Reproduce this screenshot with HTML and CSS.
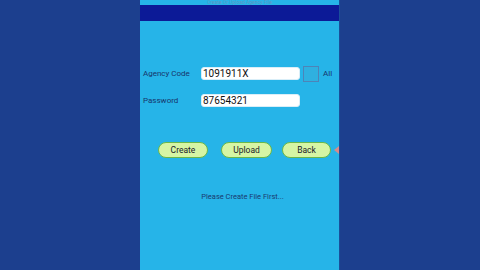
FILE: index.html
```html
<!DOCTYPE html>
<html lang="en">
<head>
    <meta charset="UTF-8">
    <meta name="viewport" content="width=device-width, initial-scale=1.0">
    <title>Agency File</title>
    <link rel="stylesheet" href="styles.css">
</head>
<body>
    <div class="phone">
        <div class="titulo">Create Or Upload Agency File</div>
        <div class="barra"></div>

        <div class="formulario">
            <div class="fila">
                <label for="agencia">Agency Code</label>
                <div class="campo" id="agencia">1091911X</div>
                <span class="check"></span>
                <span class="todos">All</span>
            </div>
            <div class="fila">
                <label for="clave">Password</label>
                <div class="campo" id="clave">87654321</div>
            </div>
        </div>

        <div class="botones">
            <button class="btn-create">Create</button>
            <button class="btn-upload">Upload</button>
            <button class="btn-back">Back</button>
            <span class="marca"></span>
        </div>

        <p class="estado">Please Create File First...</p>
    </div>
</body>
</html>
```

FILE: styles.css
```css
    body {
        margin: 0;
        height: 270px;
        background-color: #1c3f8e;
        display: flex;
        justify-content: center;
        font-family: Roboto, "Liberation Sans", Arial, sans-serif;
        overflow: hidden;
    }
    .phone {
        width: 199px;
        height: 270px;
        background-color: #26b4e8;
        border-right: 1px solid #1a4f9a;
        display: flex;
        flex-direction: column;
    }
    .titulo {
        height: 5px;
        text-align: center;
        font-size: 5px;
        line-height: 5px;
        color: #5f95c4;
    }
    .barra {
        height: 16px;
        background-color: #0c1a97;
    }
    .formulario {
        margin-top: 45px;
        padding-left: 3px;
        display: flex;
        flex-direction: column;
        gap: 12px;
    }
    .fila {
        display: flex;
        align-items: center;
        height: 15px;
    }
    .fila label {
        width: 58px;
        font-size: 8px;
        color: #17356b;
    }
    .campo {
        width: 99px;
        height: 13px;
        background-color: white;
        border-radius: 3px;
        border: 1px solid #d9eef8;
        box-sizing: border-box;
        font-size: 10px;
        line-height: 12px;
        padding-left: 1px;
        color: #111;
    }
    .check {
        width: 14px;
        height: 14px;
        margin-left: 3px;
        border: 1px solid #4d84b8;
        background-color: #2fb0e0;
    }
    .todos {
        margin-left: 4px;
        font-size: 8px;
        color: #17356b;
    }
    .botones {
        margin-top: 34px;
        padding-left: 18px;
        display: flex;
        align-items: center;
        height: 16px;
    }
    button {
        height: 16px;
        border-radius: 8px;
        border: 1px solid #6ab84a;
        background-color: #d6f5a4;
        color: #1a1a2a;
        font-family: Roboto, "Liberation Sans", Arial, sans-serif;
        font-size: 8.5px;
        padding: 0;
    }
    .btn-create {
        width: 50px;
    }
    .btn-upload {
        width: 51px;
        margin-left: 13px;
    }
    .btn-back {
        width: 49px;
        margin-left: 10px;
    }
    .marca {
        margin-left: 3px;
        width: 0;
        height: 0;
        border-top: 4px solid transparent;
        border-bottom: 4px solid transparent;
        border-right: 5px solid #d98a8a;
    }
    .estado {
        margin: 34px 0 0;
        padding-left: 6px;
        text-align: center;
        font-size: 7.5px;
        color: #1a3a70;
    }
```
